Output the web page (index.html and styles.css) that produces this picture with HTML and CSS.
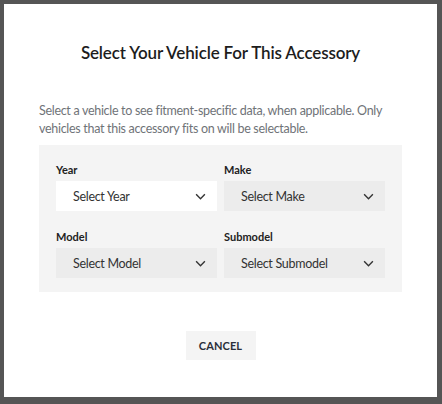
FILE: index.html
```html
<!DOCTYPE html>
<html lang="en">
<head>
    <meta charset="UTF-8">
    <meta name="viewport" content="width=device-width, initial-scale=1.0">
    <title>Select Your Vehicle</title>
    <link rel="stylesheet" href="styles.css">
</head>
<body>
    <div class="backdrop">
        <div class="modal">
            <h2 class="modal-title">Select Your Vehicle For This Accessory</h2>

            <p class="modal-text">Select a vehicle to see fitment-specific data, when applicable. Only vehicles that this accessory fits on will be selectable.</p>

            <div class="fitment">
                <div class="field">
                    <label class="field-label">Year</label>
                    <div class="select select-active">
                        <span>Select Year</span>
                        <svg class="chevron" viewBox="0 0 12 8" width="12" height="7"><path d="M1 1.5l5 5 5-5" fill="none" stroke="#333" stroke-width="1.6"/></svg>
                    </div>
                </div>
                <div class="field">
                    <label class="field-label">Make</label>
                    <div class="select">
                        <span>Select Make</span>
                        <svg class="chevron" viewBox="0 0 12 8" width="12" height="7"><path d="M1 1.5l5 5 5-5" fill="none" stroke="#333" stroke-width="1.6"/></svg>
                    </div>
                </div>
                <div class="field">
                    <label class="field-label">Model</label>
                    <div class="select">
                        <span>Select Model</span>
                        <svg class="chevron" viewBox="0 0 12 8" width="12" height="7"><path d="M1 1.5l5 5 5-5" fill="none" stroke="#333" stroke-width="1.6"/></svg>
                    </div>
                </div>
                <div class="field">
                    <label class="field-label">Submodel</label>
                    <div class="select">
                        <span>Select Submodel</span>
                        <svg class="chevron" viewBox="0 0 12 8" width="12" height="7"><path d="M1 1.5l5 5 5-5" fill="none" stroke="#333" stroke-width="1.6"/></svg>
                    </div>
                </div>
            </div>

            <div class="actions">
                <button type="button" class="btn-cancel">CANCEL</button>
            </div>
        </div>
    </div>
</body>
</html>
```

FILE: styles.css
```css
body {
    margin: 0;
    font-family: Lato, "Open Sans", sans-serif;
    background: #555;
}
.backdrop {
    padding: 4px 5px 7px 4px;
    height: 404px;
    box-sizing: border-box;
}
.modal {
    background: #fff;
    height: 100%;
    box-sizing: border-box;
    padding: 37px 35px 0 35px;
}
.modal-title {
    margin: 0;
    text-align: center;
    font-size: 17px;
    font-weight: 600;
    letter-spacing: -0.15px;
    color: #1d1d1d;
    line-height: 24px;
}
.modal-text {
    margin: 37px 0 0 0;
    font-size: 12.5px;
    letter-spacing: -0.3px;
    line-height: 18px;
    color: #6f7378;
}
.fitment {
    margin-top: 7px;
    background: #f4f4f4;
    padding: 18px 17px 14px 17px;
    display: grid;
    grid-template-columns: 1fr 1fr;
    column-gap: 7px;
    row-gap: 19px;
}
.field-label {
    display: block;
    font-size: 11px;
    font-weight: 700;
    color: #222;
    margin-bottom: 4px;
    line-height: 14px;
}
.select {
    height: 30px;
    background: #ececec;
    display: flex;
    align-items: center;
    justify-content: space-between;
    padding: 0 10px 0 17px;
    font-size: 12.5px;
    letter-spacing: -0.3px;
    color: #333;
}
.select-active {
    background: #fff;
}
.chevron {
    width: 13px;
}
.actions {
    margin-top: 39px;
    display: flex;
    justify-content: center;
}
.btn-cancel {
    border: none;
    background: #f4f4f4;
    padding: 0;
    width: 70px;
    height: 29px;
    font-family: Lato, "Open Sans", sans-serif;
    font-size: 11px;
    font-weight: 700;
    color: #2a2f3a;
    letter-spacing: 0.1px;
}
```
